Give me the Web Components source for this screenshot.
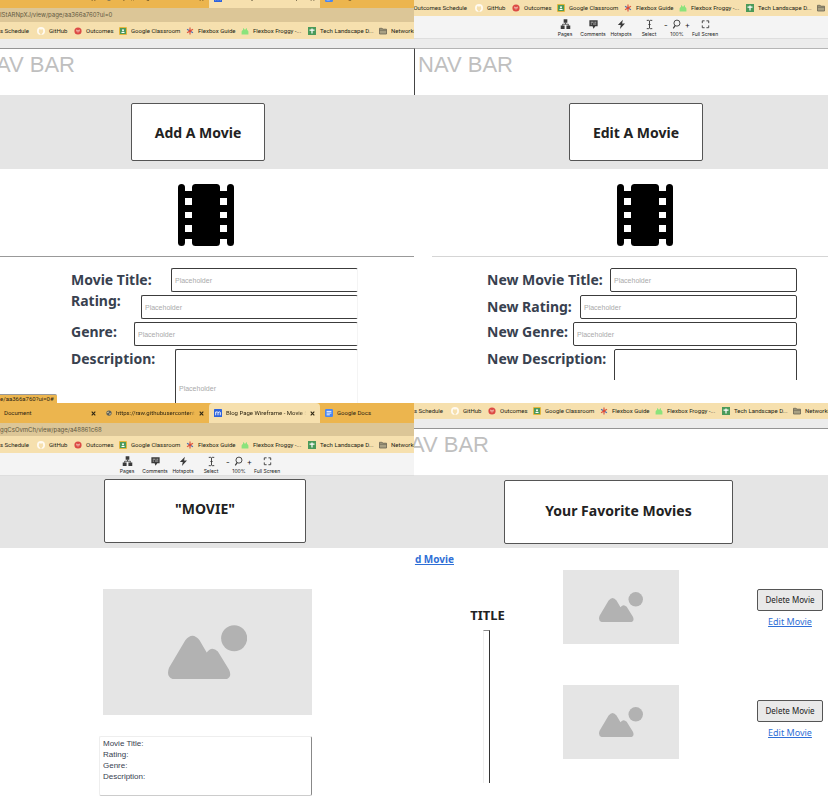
<!DOCTYPE html>
<html lang="en">
<head>
<meta charset="utf-8">
<title>Movie wireframes</title>
<style>
html, body { margin: 0; background: #fff; }
body { font-family: "Liberation Sans", Arial, sans-serif; color: #222; }
</style>
</head>
<body>
<wireframe-board></wireframe-board>
<script>
const define = (name, css, html) => customElements.define(name, class extends HTMLElement {
  constructor() {
    super();
    const t = document.createElement('template');
    t.innerHTML = `<style>*{box-sizing:border-box}:host{display:block;box-sizing:border-box}${css}</style>` + (typeof html === 'function' ? '' : html);
    this.attachShadow({ mode: 'open' }).append(t.content.cloneNode(true));
  }
  connectedCallback() {
    if (typeof html !== 'function' || this.ready) return;
    this.ready = true;
    const t = document.createElement('template');
    t.innerHTML = html(this);
    this.shadowRoot.append(t.content);
  }
});

/* Small glyphs used by tabs, bookmarks and the viewer toolbar */
const glyphs = {
  github: '<circle cx="4" cy="4" r="4" fill="#fffaf0"/><path d="M2.9 7.4V6.2C1.6 5.600 1.500 3.600 2.200 2.900L2.200 1.900L3.200 2.400H4.800L5.800 1.900V2.900C6.600 3.700 6.300 5.700 5.100 6.200V7.400Z" fill="#f6e0ae"/>',
  target: '<circle cx="4" cy="4" r="3.600" fill="#dc4a45"/><path d="M2.700 2.600V4.300Q4 6 5.300 4.300V2.600M2.800 3.600H5.200" fill="none" stroke="#f6cfc0" stroke-width=".7"/>',
  classroom: '<rect width="8" height="8" rx="1" fill="#e3b63c"/><rect x="1" y="1" width="6" height="6" fill="#4c9a5b"/><circle cx="4" cy="3.200" r="1" fill="#fff"/><path d="M2 6Q4 3.600 6 6Z" fill="#fff"/>',
  star: '<path d="M4 .6V7.400" stroke="#d84b3d" stroke-width="1.100"/><path d="M1 2.300L7 5.700" stroke="#4f6fb5" stroke-width="1.100"/><path d="M7 2.300L1 5.700" stroke="#e0573e" stroke-width="1.300"/><circle cx="4" cy="4" r="1.300" fill="#d84b3d"/>',
  frog: '<path d="M.6 7.400V4.500Q1 3 2 3V1.500Q3 .8 3.300 2.600H4.700Q5 .8 6 1.500V3Q7 3 7.400 4.500V7.400Z" fill="#8be37c"/>',
  sheet: '<rect width="8" height="8" fill="#4a9a5a"/><path d="M1.500 3.200H6.500M4 1.500V6.500" stroke="#fff" stroke-width="1.200"/>',
  folder: '<path d="M.5 1.300H3L4 2.200H7.500V7H.5ZM.5 3.200H7.500" fill="#a8a083" stroke="#6b6554" stroke-width=".8"/>',
  globe: '<circle cx="4" cy="4" r="3.500" fill="#59605d"/><path d="M1.500 2.600L4 2L3.300 4L1.800 4.300ZM4.500 4.500L6.500 3.500L5.500 6.500L4.200 5.800Z" fill="#e7cf99"/>',
  marvel: '<rect width="8" height="8" rx=".6" fill="#2d62dc"/><path d="M1.700 6.300V2.800M4 6.300V3.200M6.300 6.300V3.200M1.700 3.300Q3.800 2 4 3.600Q5.600 2 6.300 3.600" fill="none" stroke="#fff" stroke-width=".9"/>',
  docs: '<rect width="8" height="8" rx="1.200" fill="#4a86f0"/><path d="M1.600 2.400H6.400M1.600 4.100H6.400M1.600 5.800H4.800" stroke="#fff" stroke-width=".9"/>',
  pages: '<path d="M4 .2H8V4H4ZM.8 7.200H5V11H.8ZM7 7.200H11.200V11H7Z" fill="#3a3a3a"/><path d="M6 4V5.700M2.800 7.200V5.700H9.200V7.200" fill="none" stroke="#3a3a3a" stroke-width=".9"/>',
  comments: '<path d="M1.500 1.300H10.500V8H8L6 10.500L5 8H1.500Z" fill="#3a3a3a"/><path d="M3 3.500H6M7 3.500H9M3 5.500H4.500M5.500 5.500H9" stroke="#f4f4f4" stroke-width=".7"/>',
  bolt: '<path d="M7.500.8L2 6.500H5.200L4.300 11L9.800 5H6.600Z" fill="#3a3a3a"/>',
  cursor: '<path d="M3 1.500H5.200L6 2.200L6.800 1.500H9M3 10.500H5.200L6 9.800L6.800 10.500H9M6 2V10M4.800 6H7.200" fill="none" stroke="#3a3a3a"/>',
  lens: '<circle cx="6.500" cy="4.500" r="3.300" fill="none" stroke="#3a3a3a"/><path d="M4.500 7.200L2.500 10.200" stroke="#3a3a3a" stroke-width="1.300"/>',
  full: '<path d="M2.500 4.500V2H5M7 2H9.500V4.500M9.500 7V9.500H7M5 9.500H2.500V7" fill="none" stroke="#3a3a3a"/>'
};
define('ui-glyph', ':host{flex:none}svg{display:block;width:100%;height:100%}', el => {
  const box = el.getAttribute('box') || 8;
  return `<svg viewBox="0 0 ${box} ${box}" aria-hidden="true">${glyphs[el.getAttribute('name')]}</svg>`;
});

define('tab-strip', `
  :host{background:#ecb54e;overflow:hidden;font:6px/20px Roboto,sans-serif;color:#2c2412}
  :host([cut]){height:8px;display:flex;flex-direction:column;justify-content:flex-end}
  .tabs{display:grid;grid-template-columns:101px 108px 111px 1fr;height:20px;flex:none}
  .tab{display:flex;align-items:center;gap:4px;padding:0 5px;min-width:0}
  .first{padding-left:4px}.on{background:#f6e0ae;border-radius:4px 4px 0 0}
  span{flex:1;overflow:hidden;white-space:nowrap}
  .fade{mask-image:linear-gradient(90deg,#000 92%,transparent)}
  ui-glyph{width:8px;height:8px}.globe{width:6px;height:6px}
  button{border:0;background:none;padding:0;width:5px;height:5px;display:flex}
  button svg{width:5px;height:5px}`, el => {
  const x = '<button aria-label="Close tab"><svg viewBox="0 0 5 5"><path d="M.7.7L4.300 4.300M4.300.7L.7 4.300" stroke="#2c2412" stroke-width="1.100"/></svg></button>';
  return `<div class="tabs"><div class="tab first"><span>Document</span>${x}</div>
  <div class="tab"><ui-glyph class="globe" name="globe"></ui-glyph><span class="fade">https://raw.githubusercontent.</span>${x}</div>
  <div class="tab on"><ui-glyph name="marvel"></ui-glyph><span class="fade">${el.getAttribute('active')}</span>${x}</div>
  <div class="tab"><ui-glyph name="docs"></ui-glyph><span>Google Docs</span></div></div>`;
});

define('address-bar', ':host{background:#dcc697;font:6px/14px Inter,sans-serif;color:#62583f;overflow:hidden;white-space:nowrap}', '<slot></slot>');

define('bookmarks-bar', `
  :host{background:#f6e0ae;font:6px/8px Roboto,sans-serif;color:#221e14;overflow:hidden}
  nav{display:grid;grid-template-columns:calc(var(--lead,29px) + 8px) 37px 45px 67px 55px 67px 71px 1fr;align-items:center;height:100%;white-space:nowrap}
  a{color:inherit;text-decoration:none;display:flex;gap:4px;align-items:center;min-width:0}
  a:first-child{margin-right:8px;justify-content:flex-end}
  ui-glyph{width:8px;height:8px}`, el => `<nav><a href="#">${el.getAttribute('first')}</a>` +
  [['github', 'GitHub'], ['target', 'Outcomes'], ['classroom', 'Google Classroom'], ['star', 'Flexbox Guide'], ['frog', 'Flexbox Froggy -...'], ['sheet', 'Tech Landscape D...'], ['folder', el.getAttribute('last')]]
    .map(([g, t]) => `<a href="#"><ui-glyph name="${g}"></ui-glyph>${t || ''}</a>`).join('') + '</nav>');

define('viewer-tools', `
  :host{background:#f4f4f4;border-bottom:1px solid #dedede;height:23px;padding-left:var(--start);display:flex;font:5px/6px Inter,sans-serif;color:#222}
  button{all:unset;width:28px;display:flex;flex-direction:column;align-items:center;gap:1px;padding-top:3px;white-space:nowrap;box-sizing:border-box}
  ui-glyph{width:11px;height:11px}.z{display:flex;align-items:center;gap:3px;font-size:8px}`,
  [['pages', 'Pages'], ['comments', 'Comments'], ['bolt', 'Hotspots'], ['cursor', 'Select'], ['lens', '100%'], ['full', 'Full Screen']]
    .map(([g, t]) => `<button>${g === 'lens' ? '<span class="z">-<ui-glyph box="12" name="lens"></ui-glyph>+</span>' : `<ui-glyph box="12" name="${g}"></ui-glyph>`}<span>${t}</span></button>`).join(''));

define('nav-header', `
  :host{border-top:9px solid #ececec}
  div{border-top:1px solid #949494;background:#fff;height:47px;overflow:hidden;color:#bfbfbf;font-size:22px;line-height:32px}
  p{margin:0;width:var(--end,75px);display:flex;justify-content:flex-end;white-space:nowrap}
  :host([edge]) div{border-top-color:#b5b5b5;border-left:1px solid #444}`, '<div><p><slot></slot></p></div>');

define('title-band', `
  :host{background:#e5e5e5;display:flex;justify-content:center;align-items:center;height:var(--band,74px);padding:0 var(--right,0) 0 var(--left,0)}
  h1{margin:0;background:#fff;border:1px solid #555;border-radius:2px;width:var(--w,134px);height:var(--h,58px);padding:var(--pad,2px 0 0);display:flex;align-items:center;justify-content:center;font:bold 14px/20px "Noto Sans",sans-serif;color:#222}`,
  '<h1><slot></slot></h1>');

define('film-strip', ':host{display:flex;justify-content:center;padding:15px var(--right,0) 10px var(--left,0)}svg{width:56px;height:62px}', `
  <svg viewBox="0 0 56 62" role="img" aria-label="Film"><rect width="7" height="62" rx="3.500"/><rect x="49" width="7" height="62" rx="3.500"/><rect x="14" width="28" height="62" rx="3.500"/>
  <path d="M3 7H53V14H3ZM3 21H53V28H3ZM3 34H53V41H3ZM3 48H53V55H3Z"/></svg>`);

define('form-field', `
  :host{display:flex;justify-content:space-between;align-items:center}
  :host([top]){align-items:flex-start}
  label{font:bold 14px/20px "Noto Sans",sans-serif;color:#38414f;white-space:nowrap}
  :host([tight]) label{line-height:12px}
  input,textarea{font:7px/10px "Liberation Sans",sans-serif;display:block;flex:none;width:var(--w);height:24px;margin:0;padding:0 3px;background:#fff;border:1px solid #3c3c3c;border-right-color:var(--right-line,#3c3c3c);border-radius:2px;resize:none;outline:0}
  textarea{height:80px;padding:34px 3px 0}
  ::placeholder{color:#aaa}`, el => `<label for="f">${el.getAttribute('label')}</label>` +
  (el.hasAttribute('area') ? `<textarea id="f" placeholder="${el.getAttribute('area')}"></textarea>` : '<input id="f" placeholder="Placeholder">'));

define('movie-form', `
  :host{display:flow-root;border-top:1px solid var(--rule,#999);margin-left:var(--inset,0)}
  form{display:grid;gap:3px;padding:11px var(--pr) 0 var(--pl)}`, '<form><slot></slot></form>');

define('image-box', ':host{background:#e5e5e5;display:flex;align-items:center;justify-content:center}svg{width:38%}', `
  <svg viewBox="0 0 78 54" role="img" aria-label="Image placeholder" fill="#b2b2b2"><circle cx="65" cy="13" r="12.800"/>
  <path d="M1 42L17 15Q24 6 31 15L38 27Q43 20 49 26L60 44Q64 53 54 54H9Q-3 53 1 42Z"/></svg>`);

define('movie-summary', ':host{border:1px solid #eee;border-right-color:#888;border-bottom-color:#ccc;border-radius:2px;height:60px;padding:1px 3px;font-size:8px;line-height:11px;color:#38414f}p{margin:0}', '<p>Movie Title:</p><p>Rating:</p><p>Genre:</p><p>Description:</p>');

define('movie-actions', `
  :host{width:66px;display:flex;flex-direction:column;align-items:center;gap:4px;font:9px/14px "Noto Sans",sans-serif}
  button{width:100%;height:22px;padding:0;background:#e9e9e9;border:1px solid #555;border-radius:2px;font:8px/14px "Noto Sans",sans-serif;color:#222;white-space:nowrap}
  a{color:#2f6fd6}`, '<button>Delete Movie</button><a href="#">Edit Movie</a>');

define('favorites-list', `
  :host{display:grid;grid-template-columns:149px 116px 1fr}
  .names{display:flex;flex-direction:column}
  .add{font:bold 10px/14px "Noto Sans",sans-serif;color:#2f6fd6;width:40px;display:flex;justify-content:flex-end;white-space:nowrap;margin-top:4px;text-decoration:underline;overflow:hidden}
  h2{margin:39px 2px 5px 0;text-align:center;font:bold 13px/20px "Noto Sans",sans-serif}
  .bar{width:7px;height:153px;align-self:center;margin-right:4px;border-left:1px solid #eee;border-top:1px solid #888;border-right:1px solid #333}
  .pics{display:grid;gap:41px;padding-top:22px;align-content:start}image-box{height:74px}
  .acts{display:flex;flex-direction:column;align-items:flex-end;gap:71px;padding:41px 5px 0 0}`, `
  <div class="names"><a class="add" href="#">d Movie</a><h2>TITLE</h2><div class="bar"></div></div>
  <div class="pics"><image-box></image-box><image-box></image-box></div>
  <div class="acts"><movie-actions></movie-actions><movie-actions></movie-actions></div>`);

define('status-tip', ':host{position:absolute;left:0;bottom:0;background:#ecb54e;border-top:1px solid #999;border-radius:0 2px 0 0;height:9px;padding-right:3px;font:6px/8px Roboto,sans-serif;color:#2c2412}', '<slot></slot>');

define('wireframe-board', `
  :host{display:grid;grid-template-columns:1fr 1fr;grid-template-rows:403px auto}
  section{position:relative;overflow:hidden;min-width:0}
  bookmarks-bar{height:17px}
  .add{--right:18px;--pl:71px;--pr:56px;--right-line:#f4f4f4}.add film-strip{--right:2px}
  .edit{--left:30px;--pl:55px;--pr:31px;--inset:18px;--rule:#d5d5d5;--lead:53px;--end:98px;--start:137px;height:380px}
  .edit bookmarks-bar{height:16px}.edit film-strip{--left:47px}
  .blog{--right:4px;--w:202px;--h:64px;--start:113px;--pad:0 0 4px}
  .blog address-bar{height:13px}
  .blog title-band{--band:72px;padding-bottom:2px}
  .blog image-box{width:209px;height:126px;margin:41px 0 21px 103px}
  .blog movie-summary{width:213px;margin-left:99px}
  .fav bookmarks-bar{height:16px}.fav title-band{--right:5px;--w:229px;--h:64px;--band:73px;--pad:0 0 2px}`, `
  <section class="add"><tab-strip cut active="Blank Project - Movie Add pa"></tab-strip><address-bar>IStARNpXJ/view/page/aa366a760?ui=0</address-bar>
    <bookmarks-bar first="s Schedule" last="Networki"></bookmarks-bar><nav-header>AV BAR</nav-header>
    <title-band>Add A Movie</title-band><film-strip></film-strip>
    <movie-form><form-field label="Movie Title:" style="--w:187px"></form-field><form-field top tight label="Rating:" style="--w:217px"></form-field>
    <form-field top label="Genre:" style="--w:224px"></form-field><form-field top label="Description:" area="Placeholder" style="--w:183px"></form-field></movie-form>
    <status-tip>e/aa366a760?ui=0#</status-tip></section>
  <section class="edit"><bookmarks-bar first="Outcomes Schedule" last=""></bookmarks-bar><viewer-tools></viewer-tools><nav-header edge>NAV BAR</nav-header>
    <title-band>Edit A Movie</title-band><film-strip></film-strip>
    <movie-form><form-field label="New Movie Title:" style="--w:187px"></form-field><form-field label="New Rating:" style="--w:217px"></form-field>
    <form-field top label="New Genre:" style="--w:224px"></form-field><form-field top label="New Description:" area="" style="--w:183px"></form-field></movie-form></section>
  <section class="blog"><tab-strip active="Blog Page Wireframe - Movie S"></tab-strip><address-bar>gqCsOvmCh/view/page/a48861c68</address-bar>
    <bookmarks-bar first="s Schedule" last="Networki"></bookmarks-bar><viewer-tools></viewer-tools>
    <title-band>"MOVIE"</title-band><image-box></image-box><movie-summary></movie-summary></section>
  <section class="fav"><bookmarks-bar first="s Schedule" last="Networki"></bookmarks-bar><nav-header>AV BAR</nav-header>
    <title-band>Your Favorite Movies</title-band><favorites-list></favorites-list></section>`);
</script>
</body>
</html>
